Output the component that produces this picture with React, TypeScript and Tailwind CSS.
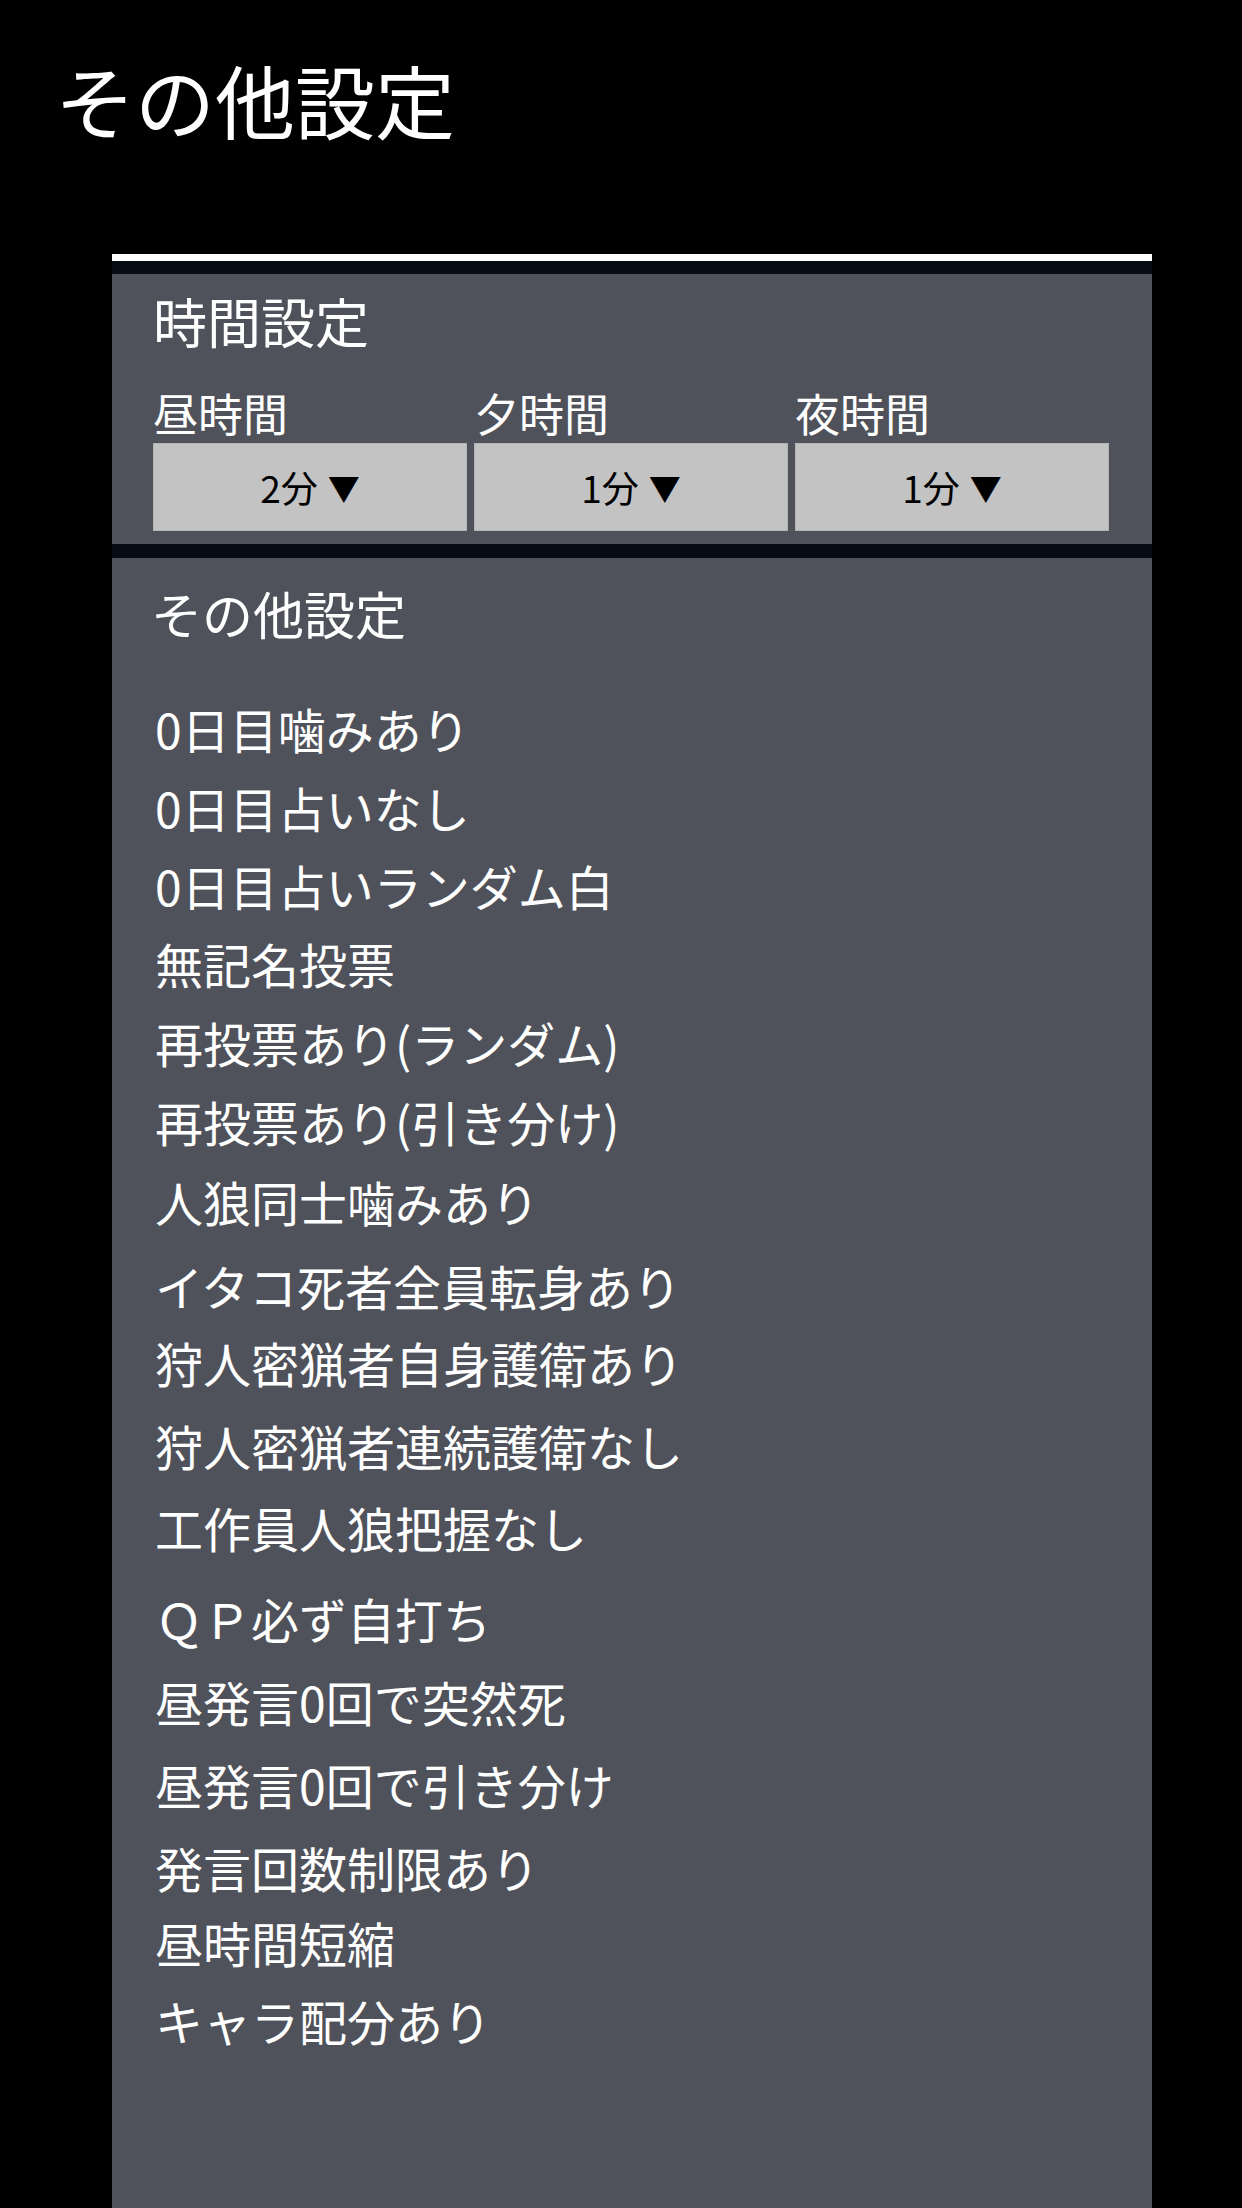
import React from 'react';

interface TimeSlot {
  id: string;
  label: string;
  value: string;
}

interface OptionRow {
  id: string;
  label: string;
  rowClass: string;
}

const timeSlots: TimeSlot[] = [
  { id: 'day', label: '昼時間', value: '2分' },
  { id: 'evening', label: '夕時間', value: '1分' },
  { id: 'night', label: '夜時間', value: '1分' },
];

// row heights follow the spacing of the original list
const options: OptionRow[] = [
  { id: 'bite0', label: '0日目噛みあり', rowClass: 'h-[79px]' },
  { id: 'seer0', label: '0日目占いなし', rowClass: 'h-[78px]' },
  { id: 'seer0rand', label: '0日目占いランダム白', rowClass: 'h-[78px]' },
  { id: 'anon', label: '無記名投票', rowClass: 'h-[79px]' },
  { id: 'revoteRand', label: '再投票あり(ランダム)', rowClass: 'h-[79px]' },
  { id: 'revoteDraw', label: '再投票あり(引き分け)', rowClass: 'h-[80px]' },
  { id: 'wolfBite', label: '人狼同士噛みあり', rowClass: 'h-[84px]' },
  { id: 'itako', label: 'イタコ死者全員転身あり', rowClass: 'h-[77px]' },
  { id: 'guardSelf', label: '狩人密猟者自身護衛あり', rowClass: 'h-[83px]' },
  { id: 'guardRepeat', label: '狩人密猟者連続護衛なし', rowClass: 'h-[82px]' },
  { id: 'agent', label: '工作員人狼把握なし', rowClass: 'h-[91px]' },
  { id: 'qp', label: 'ＱＰ必ず自打ち', rowClass: 'h-[83px]' },
  { id: 'silentDeath', label: '昼発言0回で突然死', rowClass: 'h-[83px]' },
  { id: 'silentDraw', label: '昼発言0回で引き分け', rowClass: 'h-[83px]' },
  { id: 'talkLimit', label: '発言回数制限あり', rowClass: 'h-[75px]' },
  { id: 'shortDay', label: '昼時間短縮', rowClass: 'h-[78px]' },
  { id: 'chara', label: 'キャラ配分あり', rowClass: 'h-[80px]' },
];

const App = () => {
  return (
    <div className="min-h-[2208px] w-full bg-black font-['Noto_Sans_CJK_JP','Noto_Sans',sans-serif] text-white">
      {/* Page title */}
      <div className="h-[254px] pl-[55px] pt-[58px]">
        <h1 className="text-[80px] leading-none font-normal">その他設定</h1>
      </div>

      <div className="ml-[112px] w-[1040px]">
        <div className="h-[7px] bg-white" />
        <div className="h-[13px] bg-[#070b13]" />

        {/* Time settings */}
        <section className="h-[270px] bg-[#4f525a] pl-[41px] pr-[43px] pt-[20px]">
          <h2 className="text-[54px] leading-none">時間設定</h2>
          <div className="mt-[42px] grid grid-cols-3 gap-x-[7px]">
            {timeSlots.map((slot) => (
              <div key={slot.id}>
                <div className="text-[45px] leading-none">{slot.label}</div>
                <button className="mt-[8px] flex h-[88px] w-full items-center justify-center gap-[10px] border border-[#b4b4b4] bg-[#c3c3c3] text-[37px] leading-none text-black">
                  <span>{slot.value}</span>
                  <span className="text-[32px]">▼</span>
                </button>
              </div>
            ))}
          </div>
        </section>

        <div className="h-[14px] bg-[#070b13]" />

        {/* Other settings */}
        <section className="min-h-[1650px] bg-[#4f525a] pl-[39px] pt-[30px]">
          <h2 className="text-[51px] leading-none">その他設定</h2>
          <div className="mt-[65px] pl-[4px]">
            {options.map((opt) => (
              <div key={opt.id} className={opt.rowClass}>
                <span className="block text-[48px] leading-none">{opt.label}</span>
              </div>
            ))}
          </div>
        </section>
      </div>
    </div>
  );
};

export default App;
